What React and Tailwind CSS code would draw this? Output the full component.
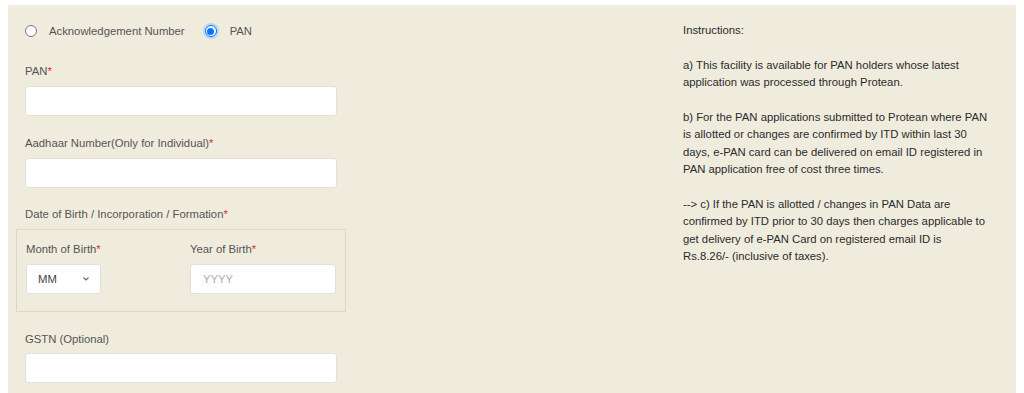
import React from "react";

function Req() {
  return <span className="text-[#e0322b]">*</span>;
}

function Label({ children, className = "" }) {
  return (
    <div className={"h-4 leading-4 text-[11.3px] text-[#555] " + className}>{children}</div>
  );
}

function TextInput({ className = "", placeholder }) {
  return (
    <div
      className={
        "h-[30px] bg-white border border-[#e2e0d8] rounded-[3px] flex items-center px-[12px] text-[11.3px] text-[#a9adb3] " +
        className
      }
    >
      {placeholder}
    </div>
  );
}

function Radio({ checked }) {
  return (
    <span
      className={
        "w-[12px] h-[12px] rounded-full flex items-center justify-center bg-white " +
        (checked ? "border border-[#0075ff] ring-2 ring-[#bcd6f7]" : "border border-[#767676]")
      }
    >
      {checked && <span className="w-[7px] h-[7px] rounded-full bg-[#0075ff]" />}
    </span>
  );
}

export default function App() {
  return (
    <div className="bg-white pt-[5px] px-[8px] h-[393px] overflow-hidden" style={{ fontFamily: '"Liberation Sans", Arial, sans-serif' }}>
      <div className="bg-[#efecde] h-[420px] flex">
        <div className="w-[330px] ml-[8px] pt-[18px]">
          <div className="flex items-center h-4 pl-[9px]">
            <Radio />
            <span className="ml-[12px] text-[11.3px] text-[#555]">Acknowledgement Number</span>
            <span className="ml-[20px]"><Radio checked /></span>
            <span className="ml-[13px] text-[11.3px] text-[#555]">PAN</span>
          </div>

          <div className="px-[9px]">
            <Label className="mt-[24px]">PAN<Req /></Label>
            <TextInput className="mt-[7px] w-[312px]" />
            <Label className="mt-[19px]">Aadhaar Number(Only for Individual)<Req /></Label>
            <TextInput className="mt-[7px] w-[312px]" />
            <Label className="mt-[18px]">Date of Birth / Incorporation / Formation<Req /></Label>
          </div>

          <div className="mt-[7px] border border-[#dbd8cb] pt-[11px] pb-[17px] pl-[9px] flex">
            <div className="w-[164px]">
              <Label>Month of Birth<Req /></Label>
              <div className="mt-[7px] w-[75px] h-[30px] bg-white border border-[#e2e0d8] rounded-[3px] flex items-center justify-between pl-[11px] pr-[10px]">
                <span className="text-[11.3px] text-[#444]">MM</span>
                <svg width="8" height="6" viewBox="0 0 8 6" fill="none">
                  <path d="M1.5 1.5 L4 4 L6.5 1.5" stroke="#666" strokeWidth="1.1" />
                </svg>
              </div>
            </div>
            <div>
              <Label>Year of Birth<Req /></Label>
              <TextInput className="mt-[7px] w-[146px]" placeholder="YYYY" />
            </div>
          </div>

          <div className="px-[9px]">
            <Label className="mt-[19px]">GSTN (Optional)</Label>
            <TextInput className="mt-[6px] w-[312px]" />
          </div>
        </div>

        <div className="ml-[337px] pt-[17px] w-[330px] whitespace-nowrap text-[11.3px] leading-[17.4px] text-[#2b2b2b]">
          <p>Instructions:</p>
          <p className="mt-[17.4px]">
            a) This facility is available for PAN holders whose latest<br />
            application was processed through Protean.
          </p>
          <p className="mt-[17.4px]">
            b) For the PAN applications submitted to Protean where PAN<br />
            is allotted or changes are confirmed by ITD within last 30<br />
            days, e-PAN card can be delivered on email ID registered in<br />
            PAN application free of cost three times.
          </p>
          <p className="mt-[17.4px]">
            --&gt; c) If the PAN is allotted / changes in PAN Data are<br />
            confirmed by ITD prior to 30 days then charges applicable to<br />
            get delivery of e-PAN Card on registered email ID is<br />
            Rs.8.26/- (inclusive of taxes).
          </p>
        </div>
      </div>
    </div>
  );
}
